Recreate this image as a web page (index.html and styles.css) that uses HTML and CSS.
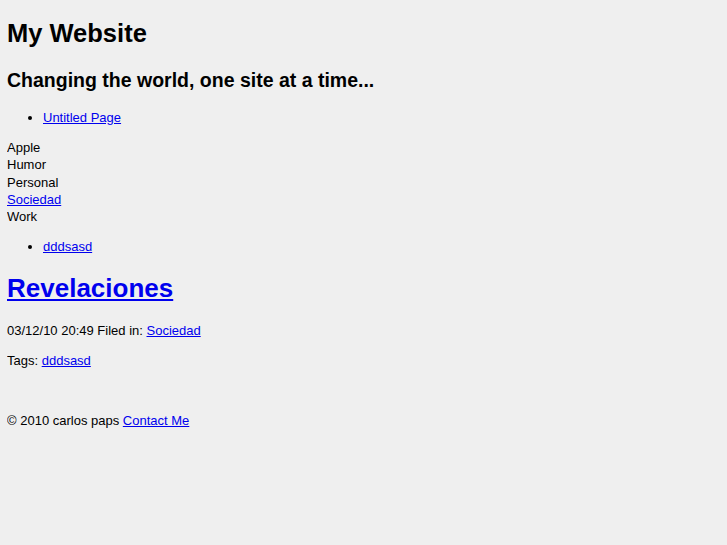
FILE: index.html
```html
<!DOCTYPE html>
<html>
<head>
    <title>My Website</title>
    <link rel="stylesheet" href="styles.css">
</head>
<body>
    <div class="header">
        <h1>My Website</h1>
        <h2>Changing the world, one site at a time...</h2>
    </div>

    <ul class="nav">
        <li><a href="#">Untitled Page</a></li>
    </ul>

    <div class="categories">
        <div>Apple</div>
        <div>Humor</div>
        <div>Personal</div>
        <div><a href="#">Sociedad</a></div>
        <div>Work</div>
    </div>

    <ul class="tags">
        <li><a href="#">dddsasd</a></li>
    </ul>

    <div class="post">
        <h1><a href="#">Revelaciones</a></h1>
        <p>03/12/10 20:49 Filed in: <a href="#">Sociedad</a></p>
        <p>Tags: <a href="#">dddsasd</a></p>
    </div>

    <div class="footer">
        &copy; 2010 carlos paps <a href="#">Contact Me</a>
    </div>
</body>
</html>
```

FILE: styles.css
```css
body {
    font-family: "Liberation Sans", Arial, sans-serif;
    font-size: 13px;
    line-height: 17px;
    background: #efefef;
    color: #000;
    margin: 8px 7px;
}
a { color: #0000ee; }
h1 { font-size: 26px; line-height: 30px; margin: 18px 0 19px; }
h2 { font-size: 19.5px; line-height: 24px; margin: 20px 0 17px; }
.header h1 { margin: 10px 0 0; font-size: 25.5px; }
.nav, .tags { margin: 13px 0; padding-left: 36px; }
.categories { margin: 0; line-height: 17.25px; }
.post p { margin: 13px 0; }
.footer { margin-top: 43px; }
```
